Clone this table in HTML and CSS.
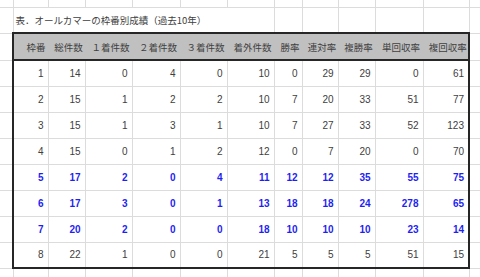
FILE: index.html
```html
<!DOCTYPE html>
<html lang="ja">
<head>
<meta charset="utf-8">
<title>オールカマーの枠番別成績</title>
<link rel="stylesheet" href="styles.css">
</head>
<body>
<table class="sheet">
  <colgroup>
    <col class="c-a"><col class="c-b"><col class="c-c"><col class="c-d"><col class="c-e"><col class="c-f"><col class="c-g"><col class="c-h"><col class="c-i"><col class="c-j"><col class="c-k"><col class="c-l"><col class="c-m">
  </colgroup>
  <tr class="r-top"><td></td><td></td><td></td><td></td><td></td><td></td><td></td><td></td><td></td><td></td><td></td><td></td><td></td></tr>
  <tr class="r-title"><td></td><td class="title" colspan="6">表．オールカマーの枠番別成績（過去10年）</td><td></td><td></td><td></td><td></td><td></td><td></td></tr>
  <tr class="r-head">
    <td></td>
    <th class="h first">枠番</th><th class="h">総件数</th><th class="h">１着件数</th><th class="h">２着件数</th><th class="h">３着件数</th><th class="h">着外件数</th><th class="h">勝率</th><th class="h">連対率</th><th class="h">複勝率</th><th class="h">単回収率</th><th class="h last">複回収率</th>
    <td></td>
  </tr>
  <tr class="r-data"><td></td><td class="n first">1</td><td class="n">14</td><td class="n">0</td><td class="n">4</td><td class="n">0</td><td class="n">10</td><td class="n">0</td><td class="n">29</td><td class="n">29</td><td class="n">0</td><td class="n last">61</td><td></td></tr>
  <tr class="r-data"><td></td><td class="n first">2</td><td class="n">15</td><td class="n">1</td><td class="n">2</td><td class="n">2</td><td class="n">10</td><td class="n">7</td><td class="n">20</td><td class="n">33</td><td class="n">51</td><td class="n last">77</td><td></td></tr>
  <tr class="r-data"><td></td><td class="n first">3</td><td class="n">15</td><td class="n">1</td><td class="n">3</td><td class="n">1</td><td class="n">10</td><td class="n">7</td><td class="n">27</td><td class="n">33</td><td class="n">52</td><td class="n last">123</td><td></td></tr>
  <tr class="r-data"><td></td><td class="n first">4</td><td class="n">15</td><td class="n">0</td><td class="n">1</td><td class="n">2</td><td class="n">12</td><td class="n">0</td><td class="n">7</td><td class="n">20</td><td class="n">0</td><td class="n last">70</td><td></td></tr>
  <tr class="r-data hl"><td></td><td class="n first">5</td><td class="n">17</td><td class="n">2</td><td class="n">0</td><td class="n">4</td><td class="n">11</td><td class="n">12</td><td class="n">12</td><td class="n">35</td><td class="n">55</td><td class="n last">75</td><td></td></tr>
  <tr class="r-data hl"><td></td><td class="n first">6</td><td class="n">17</td><td class="n">3</td><td class="n">0</td><td class="n">1</td><td class="n">13</td><td class="n">18</td><td class="n">18</td><td class="n">24</td><td class="n">278</td><td class="n last">65</td><td></td></tr>
  <tr class="r-data hl"><td></td><td class="n first">7</td><td class="n">20</td><td class="n">2</td><td class="n">0</td><td class="n">0</td><td class="n">18</td><td class="n">10</td><td class="n">10</td><td class="n">10</td><td class="n">23</td><td class="n last">14</td><td></td></tr>
  <tr class="r-data r-end"><td></td><td class="n first">8</td><td class="n">22</td><td class="n">1</td><td class="n">0</td><td class="n">0</td><td class="n">21</td><td class="n">5</td><td class="n">5</td><td class="n">5</td><td class="n">51</td><td class="n last">15</td><td></td></tr>
  <tr class="r-bottom"><td></td><td></td><td></td><td></td><td></td><td></td><td></td><td></td><td></td><td></td><td></td><td></td><td></td></tr>
</table>
</body>
</html>
```

FILE: styles.css
```css
html, body {
  margin: 0;
  padding: 0;
  background: #ffffff;
  overflow: hidden;
}

.sheet {
  border-collapse: collapse;
  table-layout: fixed;
  width: 480px;
  font-family: "Noto Sans CJK JP", "Liberation Sans", sans-serif;
  font-size: 9.5px;
  color: #404040;
}

.c-a { width: 13px; }
.c-b { width: 35px; }
.c-c { width: 37px; }
.c-d { width: 47px; }
.c-e { width: 48px; }
.c-f { width: 47px; }
.c-g { width: 47px; }
.c-h { width: 28px; }
.c-i { width: 36px; }
.c-j { width: 37px; }
.c-k { width: 48px; }
.c-l { width: 46px; }
.c-m { width: 11px; }

.sheet td,
.sheet th {
  border: 1px solid #dcdcdc;
  padding: 0;
  overflow: hidden;
  white-space: nowrap;
}

.sheet .r-top td { border-top: none; }
.sheet .r-title { height: 26px; }
.sheet .r-top { height: 7px; }
.sheet .r-head { height: 27px; }
.sheet .r-data { height: 26px; }
.sheet .r-bottom { height: 9px; }
.sheet .r-bottom td { border-bottom: none; }

.sheet td:first-child { border-left: none; }
.sheet td:last-child { border-right: none; }

.sheet .title {
  text-align: left;
  padding-left: 2px;
  color: #404040;
}

.sheet .h {
  background: #c0c0c0;
  font-weight: normal;
  text-align: center;
  padding: 0 0 0 4px;
  border-top: 2px solid #262626;
  border-bottom: 2px solid #262626;
  border-left: 1px solid #c0c0c0;
  border-right: 1px solid #c0c0c0;
}
.sheet .h.first {
  text-align: right;
  padding: 0 2px 0 0;
}

.sheet .n {
  font-family: "Liberation Sans", "Noto Sans CJK JP", sans-serif;
  font-size: 10px;
  text-align: right;
  padding: 0 4px 0 0;
  color: #404040;
}

.sheet .hl .n {
  color: #1f1ff2;
  font-weight: bold;
}

.sheet .first { border-left: 2px solid #262626; }
.sheet .last { border-right: 2px solid #262626; }
.sheet .r-end .n { border-bottom: 2px solid #262626; }
```
